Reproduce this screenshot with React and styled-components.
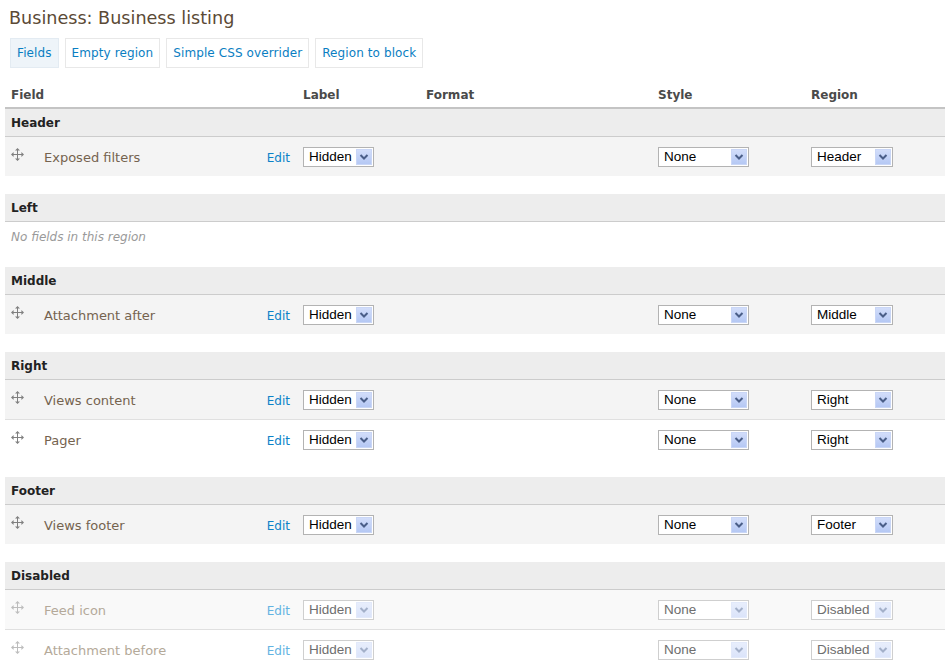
import React from "react";
import styled, { createGlobalStyle } from "styled-components";

const GlobalStyle = createGlobalStyle`
  body {
    margin: 0;
    background: #fff;
    font-family: "DejaVu Sans", Verdana, sans-serif;
    font-size: 12px;
  }
`;

const COLS = "292px 123px 232px 153px 140px";

const Page = styled.div`
  padding: 7px 7px 0 5px;
  width: 940px;
`;

const Title = styled.h1`
  margin: 0 0 8px 4px;
  font-size: 17.6px;
  line-height: 23px;
  font-weight: normal;
  color: #5b4a36;
`;

const Tabs = styled.ul`
  display: flex;
  gap: 6px;
  margin: 0 0 14px 5px;
  padding: 0;
  list-style: none;
`;

const Tab = styled.li`
  height: 28px;
  line-height: 28px;
  padding: 0 6px;
  border: 1px solid ${(p) => (p.$active ? "#e3ebf2" : "#e8e8e8")};
  background: ${(p) => (p.$active ? "#eef4f9" : "#fff")};
  color: #0a7ec2;
  font-size: 12px;
  letter-spacing: 0.1px;
`;

const HeadRow = styled.div`
  display: grid;
  grid-template-columns: ${COLS};
  height: 25px;
  align-items: center;
  border-bottom: 2px solid #c4c4c4;
`;

const HeadCell = styled.div`
  padding-left: 6px;
  font-weight: bold;
  color: #4a4a4a;
`;

const RegionHead = styled.div`
  height: 27px;
  line-height: 29px;
  padding-left: 6px;
  background: #ededed;
  border-bottom: 1px solid #cccccc;
  font-weight: bold;
  color: #222;
`;

const FieldRow = styled.div`
  display: grid;
  grid-template-columns: ${COLS};
  height: ${(p) => (p.$first ? "39px" : "40px")};
  box-sizing: border-box;
  align-items: center;
  background: ${(p) => (p.$odd ? (p.$disabled ? "#f9f9f9" : "#f4f4f4") : "#fff")};
  border-top: ${(p) => (p.$first ? "none" : "1px solid #e0e0e0")};
`;

const FieldCell = styled.div`
  display: flex;
  align-items: center;
  height: 100%;
  box-sizing: border-box;
  padding: 2px 7px 0 6px;
`;

const Handle = styled.span`
  align-self: flex-start;
  margin-top: 9px;
  width: 13px;
  height: 13px;
  display: flex;
  color: ${(p) => (p.$disabled ? "#bdbdbd" : "#808080")};
`;

const FieldName = styled.span`
  margin-left: 20px;
  font-size: 13px;
  color: ${(p) => (p.$disabled ? "#b4a999" : "#75634f")};
  flex: 1;
`;

const EditLink = styled.a`
  color: ${(p) => (p.$disabled ? "#62b3e2" : "#0b82c8")};
  text-decoration: none;
  font-size: 12px;
`;

const SelectCell = styled.div`
  padding-left: 6px;
`;

const SelectBox = styled.div`
  position: relative;
  width: ${(p) => p.$w}px;
  height: 20px;
  box-sizing: border-box;
  border: 1px solid ${(p) => (p.$disabled ? "#cfcfcf" : "#b3b3b3")};
  background: #fff;
  font-family: "Liberation Sans", Arial, sans-serif;
  font-size: 13.5px;
  line-height: 18px;
  padding-left: 5px;
  color: ${(p) => (p.$disabled ? "#6e6e6e" : "#000")};
`;

const Arrow = styled.span`
  position: absolute;
  right: 1px;
  top: 1px;
  width: 16px;
  height: 16px;
  box-sizing: border-box;
  border: 1px solid ${(p) => (p.$disabled ? "#e2e9fa" : "#c9d6f6")};
  background: ${(p) =>
    p.$disabled
      ? "linear-gradient(#e8eefc, #dbe4fa)"
      : "linear-gradient(#d2ddfa, #b5c8f4)"};
  display: flex;
  align-items: center;
  justify-content: center;
  color: ${(p) => (p.$disabled ? "#a3b0c9" : "#4a5e88")};
`;

const Empty = styled.div`
  height: 27px;
  line-height: 30px;
  padding-left: 6px;
  font-style: italic;
  color: #9a9a9a;
`;

const Spacer = styled.div`
  height: 18px;
`;

function DragIcon() {
  return (
    <svg width="13" height="13" viewBox="0 0 13 13" fill="currentColor">
      <path d="M6.5 2v9M2 6.5h9" stroke="currentColor" strokeWidth="1" />
      <path d="M6.5 0L4 2.6h5zM6.5 13L4 10.4h5zM0 6.5L2.6 4v5zM13 6.5L10.4 4v5z" />
    </svg>
  );
}

function Select({ value, width, disabled }) {
  return (
    <SelectBox $w={width} $disabled={disabled}>
      {value}
      <Arrow $disabled={disabled}>
        <svg width="10" height="8" viewBox="0 0 10 8">
          <path d="M1.5 2l3.5 3.5L8.5 2" fill="none" stroke="currentColor" strokeWidth="2" />
        </svg>
      </Arrow>
    </SelectBox>
  );
}

const regions = [
  { name: "Header", fields: ["Exposed filters"] },
  { name: "Left", fields: [] },
  { name: "Middle", fields: ["Attachment after"] },
  { name: "Right", fields: ["Views content", "Pager"] },
  { name: "Footer", fields: ["Views footer"] },
  { name: "Disabled", disabled: true, fields: ["Feed icon", "Attachment before"] },
];

const tabs = ["Fields", "Empty region", "Simple CSS overrider", "Region to block"];

export default function App() {
  return (
    <Page>
      <GlobalStyle />
      <Title>Business: Business listing</Title>
      <Tabs>
        {tabs.map((t, i) => (
          <Tab key={t} $active={i === 0}>
            {t}
          </Tab>
        ))}
      </Tabs>
      <HeadRow>
        <HeadCell>Field</HeadCell>
        <HeadCell>Label</HeadCell>
        <HeadCell>Format</HeadCell>
        <HeadCell>Style</HeadCell>
        <HeadCell>Region</HeadCell>
      </HeadRow>
      {regions.map((r, ri) => (
        <React.Fragment key={r.name}>
          <RegionHead>{r.name}</RegionHead>
          {r.fields.length === 0 && <Empty>No fields in this region</Empty>}
          {r.fields.map((f, i) => (
            <FieldRow key={f} $odd={i % 2 === 0} $first={i === 0} $disabled={r.disabled}>
              <FieldCell>
                <Handle $disabled={r.disabled}>
                  <DragIcon />
                </Handle>
                <FieldName $disabled={r.disabled}>{f}</FieldName>
                <EditLink href="#" $disabled={r.disabled}>
                  Edit
                </EditLink>
              </FieldCell>
              <SelectCell>
                <Select value="Hidden" width={71} disabled={r.disabled} />
              </SelectCell>
              <div />
              <SelectCell>
                <Select value="None" width={91} disabled={r.disabled} />
              </SelectCell>
              <SelectCell>
                <Select value={r.name} width={82} disabled={r.disabled} />
              </SelectCell>
            </FieldRow>
          ))}
          {ri < regions.length - 1 && <Spacer />}
        </React.Fragment>
      ))}
    </Page>
  );
}
